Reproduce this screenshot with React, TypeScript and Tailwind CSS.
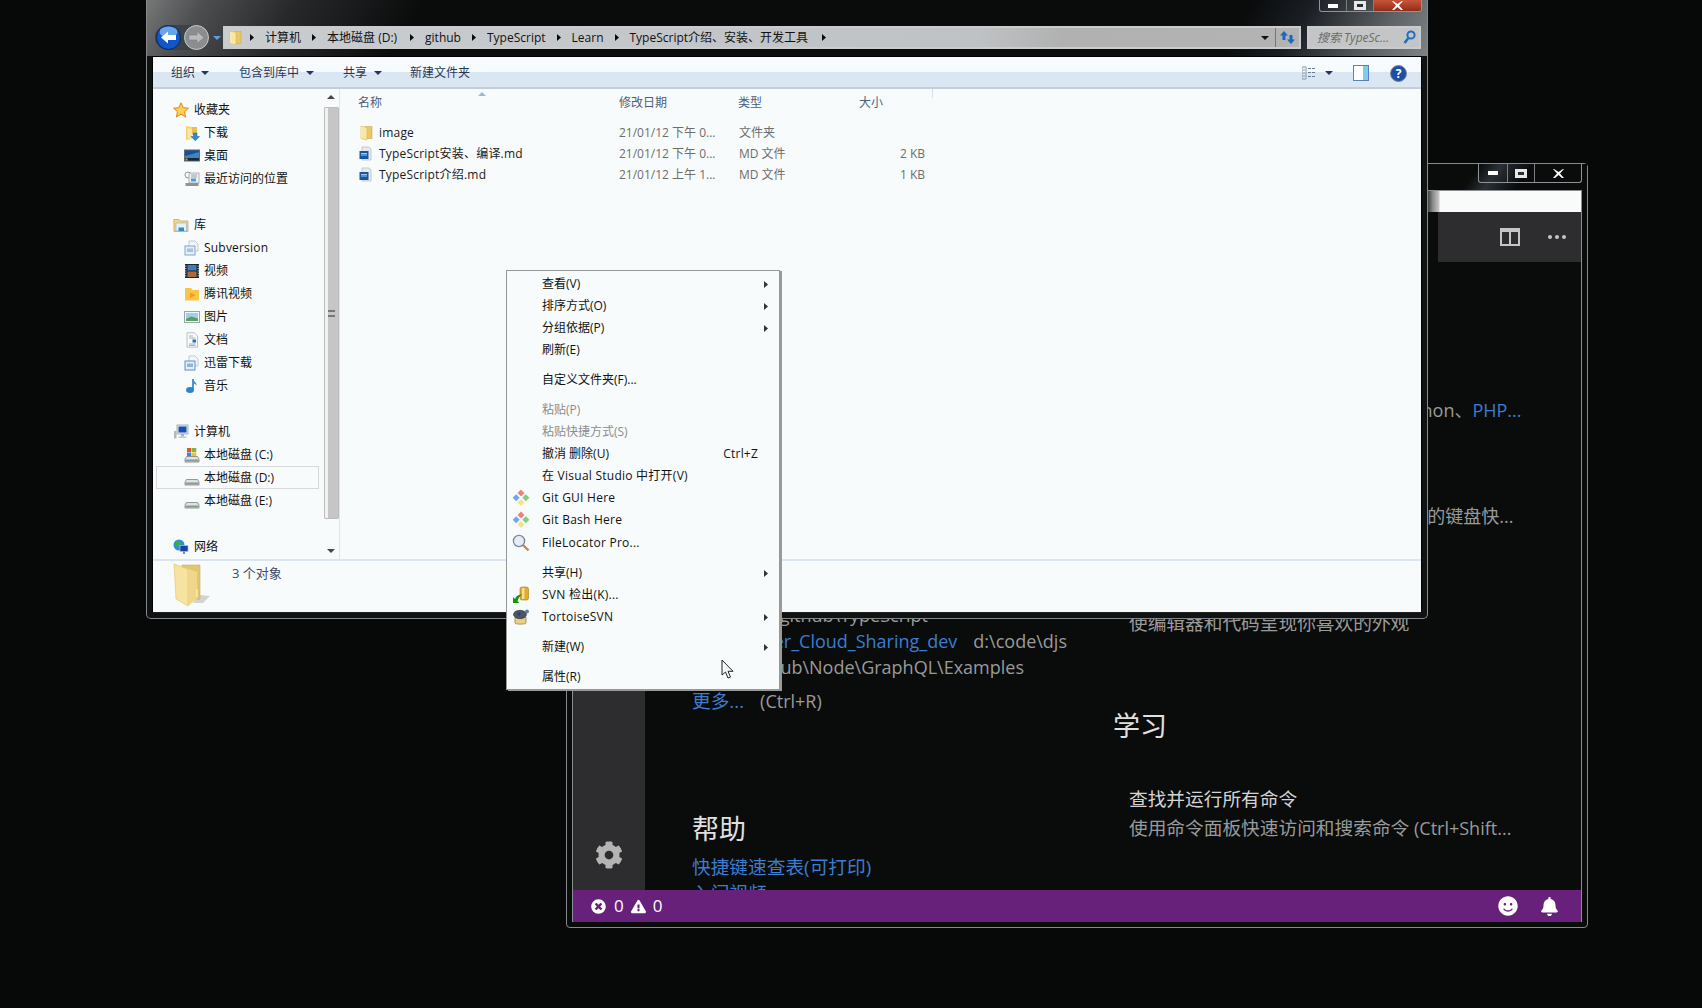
import React from "react";
import { FaCog, FaSmile, FaBell, FaTimesCircle, FaExclamationTriangle } from "react-icons/fa";

const Tri = ({ c = "#0a0a0a" }: { c?: string }) => (
  <svg width="4" height="7" viewBox="0 0 4 7" className="shrink-0"><path d="M0 0L4 3.5L0 7Z" fill={c} /></svg>
);
const Caret = ({ c = "#1e395b" }: { c?: string }) => (
  <svg width="8" height="4" viewBox="0 0 8 4" className="shrink-0"><path d="M0 0H8L4 4Z" fill={c} /></svg>
);

const Folder = () => (
  <svg width="16" height="16" viewBox="0 0 16 16" className="shrink-0">
    <path d="M7 1.5H14V13.5H7Z" fill="#e9c868" stroke="#cfa94e" strokeWidth=".6" />
    <path d="M3 1L9 2.5V15L3 13.5Z" fill="#f9e6a0" stroke="#dcb95c" strokeWidth=".6" />
    <path d="M3.8 2V13" stroke="#fff6cf" strokeWidth=".8" />
  </svg>
);
const BigFolder = () => (
  <svg width="38" height="44" viewBox="0 0 38 44" className="shrink-0">
    <path d="M27 32L37 33L30 40L20 40Z" fill="#cfd3d6" />
    <path d="M9 2H27V36L9 38Z" fill="#e3c672" stroke="#d2b05a" strokeWidth=".6" />
    <path d="M1 1L15 6V43L3 36Z" fill="#f7e3a0" stroke="#e0c268" strokeWidth=".6" />
    <path d="M15 6L24 9V36L15 43Z" fill="#efd68a" />
    <path d="M24 26V34" stroke="#fff6d0" strokeWidth="1" />
  </svg>
);
const MdFile = () => (
  <svg width="16" height="16" viewBox="0 0 16 16" className="shrink-0">
    <path d="M4 1H11L13 3V14H4Z" fill="#e9eaec" stroke="#b4b8bc" strokeWidth=".7" />
    <rect x="1.5" y="5" width="9" height="8" fill="#15589f" />
    <path d="M3 7.5H9M3 9H9" stroke="#cfe2f4" strokeWidth=".8" />
  </svg>
);
const Star = () => (
  <svg width="16" height="16" viewBox="0 0 16 16"><path d="M8 .8L10.2 5.7L15.4 6.2L11.5 9.7L12.7 15L8 12.2L3.3 15L4.5 9.7L.6 6.2L5.8 5.7Z" fill="#fbd14d" stroke="#e4831f" strokeWidth="1" /></svg>
);
const Download = () => (
  <svg width="16" height="16" viewBox="0 0 16 16">
    <path d="M2 1L8 2V14L2 15Z" fill="#f3d36f" /><path d="M8 2H13V10H8Z" fill="#e8bd56" /><path d="M3.5 3L8 4V14L3.5 13.5Z" fill="#fae7a4" />
    <path d="M9.5 8H13V11.5H15.5L11.3 15.8L7 11.5H9.5Z" fill="#2f8bd8" stroke="#1a5f9f" strokeWidth=".5" />
  </svg>
);
const Desktop = () => (
  <svg width="16" height="16" viewBox="0 0 16 16">
    <rect x=".5" y="2" width="15" height="11" fill="#1b4f94" stroke="#5b6b7d" />
    <path d="M1 8L15 4V10H1Z" fill="#3f82cc" /><rect x="1" y="10" width="14" height="2.5" fill="#20262c" /><rect x="1.5" y="10.5" width="2" height="2" fill="#e09a2f" />
  </svg>
);
const Recent = () => (
  <svg width="16" height="16" viewBox="0 0 16 16">
    <circle cx="4" cy="4" r="3" fill="#fff" stroke="#8d9499" />
    <rect x="5" y="2" width="10" height="10" fill="#eef1f3" stroke="#9aa2a8" strokeWidth=".8" />
    <path d="M7 4H13M7 6H13" stroke="#9aa2a8" /><rect x="7" y="7.5" width="5" height="3" fill="#4d9ad8" />
    <rect x="1.5" y="12" width="13" height="3" fill="#8c9298" />
  </svg>
);
const Library = () => (
  <svg width="16" height="16" viewBox="0 0 16 16">
    <path d="M.8 2.5H6L7 4H15V14.5H1Z" fill="#f3d67f" stroke="#c9a24b" strokeWidth=".7" />
    <path d="M3 6H13.5V14H3Z" fill="#e4f0fb" stroke="#8cb3d8" strokeWidth=".6" />
    <path d="M5.5 14V10.5H11V14" fill="#3b85c7" />
  </svg>
);
const DocLib = ({ accent = "#7ea7cf" }: { accent?: string }) => (
  <svg width="16" height="16" viewBox="0 0 16 16">
    <path d="M5 1H11L14 4V11H5Z" fill="#f4f6f8" stroke="#a8b8c8" strokeWidth=".7" />
    <rect x="1" y="6" width="10" height="9" fill="#e6eef6" stroke={accent} />
    <rect x="3" y="8.5" width="6" height="3.5" fill={accent} opacity=".6" />
  </svg>
);
const Video = () => (
  <svg width="16" height="16" viewBox="0 0 16 16">
    <rect x="1" y="1" width="14" height="14" fill="#1c2630" /><rect x="3.5" y="2" width="9" height="5.5" fill="#3d7db4" /><rect x="3.5" y="8.5" width="9" height="5.5" fill="#b06a37" />
    <path d="M1.8 2.5V14M14.2 2.5V14" stroke="#dfe6ec" strokeWidth="1" strokeDasharray="1.2 1.2" />
  </svg>
);
const Tencent = () => (
  <svg width="16" height="16" viewBox="0 0 16 16">
    <path d="M1 2H7L8.5 4H15V14.5H1Z" fill="#f8c545" /><path d="M6 6.5L11.5 9.3L6 12Z" fill="#f39a1f" />
  </svg>
);
const Picture = () => (
  <svg width="16" height="16" viewBox="0 0 16 16">
    <rect x=".5" y="2.5" width="15" height="11" fill="#f3f6f8" stroke="#9aa5ae" />
    <rect x="2" y="4" width="12" height="8" fill="#9fd0ee" /><path d="M2 10L7 7.5L14 9.5V12H2Z" fill="#5b9e5d" />
  </svg>
);
const Doc = () => (
  <svg width="16" height="16" viewBox="0 0 16 16">
    <path d="M3 .8H10.5L13.5 3.8V15.2H3Z" fill="#f8fafb" stroke="#a9b2ba" strokeWidth=".8" />
    <path d="M5 4H9M5 6H11.5M5 12H11.5M5 13.5H11.5" stroke="#8ea0b0" strokeWidth=".8" /><rect x="8.5" y="7.5" width="3.5" height="3" fill="#2f6fb1" />
  </svg>
);
const Music = () => (
  <svg width="16" height="16" viewBox="0 0 16 16">
    <path d="M9 1V11.5" stroke="#2579c9" strokeWidth="1.6" /><ellipse cx="6" cy="12" rx="4" ry="3" fill="#2b83d4" /><path d="M9 1C10 4 13 4 12.5 8C12 6 10.5 6 9 5.5Z" fill="#3a95de" />
  </svg>
);
const Computer = () => (
  <svg width="16" height="16" viewBox="0 0 16 16">
    <rect x="4" y="1" width="11" height="9" fill="#e4e8ec" stroke="#8a949c" strokeWidth=".7" /><rect x="5.5" y="2.5" width="8" height="6" fill="#1751b8" />
    <rect x="8" y="10" width="3" height="2.5" fill="#a9b0b6" /><rect x="5.5" y="12.5" width="8" height="1.5" fill="#c4c9ce" /><rect x="1" y="7" width="2.5" height="7.5" fill="#b2bbb2" />
  </svg>
);
const Drive = ({ win = false }: { win?: boolean }) => (
  <svg width="16" height="16" viewBox="0 0 16 16">
    {win && <g><rect x="3" y="1" width="4.3" height="4" fill="#e2552b" /><rect x="8" y="1" width="4.3" height="4" fill="#7fb73a" /><rect x="3" y="5.5" width="4.3" height="4" fill="#3a86d8" /><rect x="8" y="5.5" width="4.3" height="4" fill="#f3c02d" /></g>}
    <path d="M2.5 9.5H13.5L15 12V15H1V12Z" fill="#dfe2e3" stroke="#7d8285" strokeWidth=".8" />
    <rect x="1.5" y="12.5" width="13" height="2" fill="#8f9598" /><rect x="11.5" y="12.8" width="1.5" height="1.2" fill="#4fc04f" />
  </svg>
);
const Network = () => (
  <svg width="16" height="16" viewBox="0 0 16 16">
    <circle cx="6" cy="6" r="5.5" fill="#2f8fd6" /><path d="M3 2.5L7 1.5L8 5L5 8L2 5.5Z" fill="#47a846" />
    <rect x="7" y="6.5" width="8" height="6" fill="#1444ad" stroke="#bac3cc" strokeWidth=".7" /><rect x="10" y="12.5" width="2" height="2.5" fill="#7f8a94" />
  </svg>
);
const GitIcon = () => (
  <svg width="18" height="18" viewBox="0 0 18 18">
    <path d="M9 .5L12.5 4L9 7.5L5.5 4Z" fill="#f08080" /><path d="M4.2 5.2L7.7 8.7L4.2 12.2L.7 8.7Z" fill="#6fa8e8" />
    <path d="M13.8 5.2L17.3 8.7L13.8 12.2L10.3 8.7Z" fill="#7fcf7f" /><path d="M9 9.9L12.5 13.4L9 16.9L5.5 13.4Z" fill="#f4e486" />
  </svg>
);
const Lens = () => (
  <svg width="18" height="18" viewBox="0 0 18 18">
    <line x1="10.5" y1="10.5" x2="16.5" y2="16.5" stroke="#c98a4d" strokeWidth="2.4" />
    <circle cx="7" cy="7" r="5.6" fill="#e4edf5" stroke="#7b8791" strokeWidth="1.3" />
  </svg>
);
const SvnCheckout = () => (
  <svg width="18" height="18" viewBox="0 0 18 18">
    <rect x="8" y="1" width="8.5" height="13" rx="2" fill="#e7a92c" stroke="#a9761a" strokeWidth=".6" /><rect x="10" y="2" width="2.5" height="11" fill="#f8de8b" />
    <path d="M1 17V11L3 13C4.5 9.5 7 8.5 10.5 8.5C8 10 6.5 11.5 5.5 15L7.5 17Z" fill="#119611" />
  </svg>
);
const Tortoise = () => (
  <svg width="18" height="18" viewBox="0 0 18 18">
    <path d="M3 9H14V15C14 16.5 3 16.5 3 15Z" fill="#e9cf80" stroke="#8b7740" strokeWidth=".7" />
    <ellipse cx="8" cy="6.5" rx="6.5" ry="4.2" fill="#4a5568" stroke="#2a303a" strokeWidth=".6" /><circle cx="15" cy="3.5" r="2" fill="#5a7fb5" /><circle cx="7" cy="6" r="1.5" fill="#2d3f70" />
  </svg>
);

const Row = ({ icon, label, child, selected, wide }: { icon?: React.ReactNode; label?: string; child?: boolean; selected?: boolean; wide?: boolean }) => (
  <div className={selected ? "h-[23px] mr-[2px] flex items-center border border-[#d9d9d9] box-border" : "h-[23px] flex items-center"}>
    {label && (
      <div className={child ? `flex items-center gap-[4px] -ml-px ${selected ? "pl-[28px]" : "pl-[29px]"}` : "flex items-center gap-[5px] pl-[17px]"}>
        <span className="w-4 h-4 shrink-0">{icon}</span>
        <span className={wide ? "text-[12px] text-[#111] leading-none whitespace-nowrap tracking-[0.2px]" : "text-[12px] text-[#111] leading-none whitespace-nowrap"}>{label}</span>
      </div>
    )}
  </div>
);

const Crumb = ({ t, cls = "mr-[11px]" }: { t: string; cls?: string }) => (
  <div className="flex items-center">
    <Tri />
    <span className={`ml-[11px] ${cls} whitespace-nowrap text-[12px] text-[#111]`}>{t}</span>
  </div>
);

const FileRow = ({ icon, name, date, type, size }: { icon: React.ReactNode; name: string; date: string; type: string; size?: string }) => (
  <div className="grid grid-cols-[20px_240px_120px_186px] h-[21px] items-center pl-[19px] text-[12px]">
    <span className="flex items-center -ml-px">{icon}</span>
    <span className="text-[#1a1a1a] whitespace-nowrap tracking-[0.2px]">{name}</span>
    <span className="text-[#6d6d6d] whitespace-nowrap">{date}</span>
    <span className="flex">
      <span className="text-[#6d6d6d] w-[60px] whitespace-nowrap">{type}</span>
      <span className="text-[#6d6d6d] flex-1 text-right">{size}</span>
    </span>
  </div>
);

const Caption = ({ w1, w2, w3, red, h }: { w1: string; w2: string; w3: string; red?: boolean; h: string }) => (
  <div className={`flex ${h} border border-t-0 border-[#8f9496] rounded-b-[3px] overflow-hidden`}>
    <div className={`${w1} flex items-center justify-center border-r border-[#7a7f82]`}><span className="block w-[10px] h-[4px] bg-white" /></div>
    <div className={`${w2} flex items-center justify-center border-r border-[#7a7f82]`}><span className="block w-[12px] h-[9px] border-[3px] border-[#e8e8e8] bg-[#2a2c2e]" /></div>
    <div className={`${w3} flex items-center justify-center ${red ? "bg-[linear-gradient(180deg,#c9553a,#8f2d18)]" : ""}`}>
      <svg width="11" height="9" viewBox="0 0 11 9"><path d="M1 0L5.5 3L10 0H11L7 4.5L11 9H9L5.5 6L2 9H0L4 4.5L0 0Z" fill="#fff" /></svg>
    </div>
  </div>
);

const MenuItem = ({ label, icon, arrow, dis, right, cls = "", wide }: { label: string; icon?: React.ReactNode; arrow?: boolean; dis?: boolean; right?: string; cls?: string; wide?: boolean }) => (
  <div className={`h-[22px] flex items-center relative pl-[35px] pr-[11px] ${cls}`}>
    {icon && <span className="absolute left-[5px] top-[2px]">{icon}</span>}
    <span className={`text-[12px] whitespace-nowrap ${dis ? "text-[#8c8c8c]" : "text-[#111]"} ${wide ? "tracking-[0.25px]" : ""}`}>{label}</span>
    {right && <span className="ml-auto mr-[10px] text-[12px] text-[#111] tracking-[0.2px]">{right}</span>}
    {arrow && <span className="ml-auto"><Tri c="#333" /></span>}
  </div>
);

const FONT = "[font-family:'Open_Sans','Noto_Sans_CJK_SC',sans-serif]";

export default function App() {
  return (
    <div className={`relative w-[1702px] h-[1008px] overflow-hidden bg-[#070909] ${FONT}`}>
      {/* VS Code window */}
      <div className="absolute left-[566px] top-[163px] w-[1022px] h-[765px] border border-[#85898b] rounded-[4px] flex flex-col bg-[#0a0c0c] pb-[5px]">
        <div className="h-[26px] flex justify-end pr-[5px] bg-[linear-gradient(125deg,#0a0c0c_88%,#2a3036_90%,#0a0c0c_93%)]">
          <Caption w1="w-[29px]" w2="w-[27px]" w3="w-[46px]" h="h-[19px]" />
        </div>
        <div className="mx-[5px] flex-1 flex flex-col border-x border-t border-[#8a8e90] min-h-0">
          <div className="h-[21px] shrink-0 bg-[linear-gradient(90deg,#444_855px,#8d8d8d_860px,#c8c8c8_866px,#f9fbfb_867px)]" />
          <div className="flex-1 flex min-h-0 overflow-hidden">
            <div className="w-[72px] shrink-0 bg-[#2d2d30] flex flex-col justify-end items-center pb-[21px]">
              <FaCog className="text-[#b4b4b4] text-[28px]" />
            </div>
            <div className="flex-1 flex flex-col min-w-0">
              <div className="h-[50px] shrink-0 ml-[793px] bg-[#2d2d30] flex items-center">
                <svg width="20" height="18" viewBox="0 0 20 18" className="ml-[62px]"><path d="M0 0H20V18H0ZM2 4V16H9V4ZM11 4V16H18V4Z" fill="#c5c5c5" fillRule="evenodd" /></svg>
                <div className="ml-[28px] flex gap-[3px]">
                  <span className="w-1 h-1 rounded-full bg-[#c5c5c5]" /><span className="w-1 h-1 rounded-full bg-[#c5c5c5]" /><span className="w-1 h-1 rounded-full bg-[#c5c5c5]" />
                </div>
              </div>
              <div className="flex-1 flex min-h-0 text-[18px]">
                <div className="w-[467px] shrink-0 pl-[47px] pt-[340px]">
                  <div className="w-[236px] leading-[26px] text-right whitespace-nowrap"><span className="text-[#3b7dd0]">Learn</span><span className="ml-[10px] text-[#9a9a9a]">D:\github\TypeScript</span></div>
                  <div className="w-[375px] leading-[26px] text-right whitespace-nowrap"><span className="text-[#3b7dd0]">Docker_Cloud_Sharing_dev</span><span className="ml-[16px] text-[#9a9a9a]">d:\code\djs</span></div>
                  <div className="w-[332px] leading-[26px] text-right whitespace-nowrap"><span className="text-[#3b7dd0]">QL</span><span className="ml-[4px] text-[#9a9a9a]">D:\github\Node\GraphQL\Examples</span></div>
                  <div className="mt-[8px] leading-[26px] whitespace-nowrap"><span className="text-[#3b7dd0] text-[18.7px]">更多...</span><span className="ml-[16px] text-[#9a9a9a]">(Ctrl+R)</span></div>
                  <div className="mt-[95px] h-[40px] text-[27px] leading-[40px] text-[#e0e0e0]">帮助</div>
                  <div className="mt-[5px] leading-[26px] text-[#3b7dd0] text-[18.7px]">快捷键速查表(可打印)</div>
                  <div className="leading-[26px] text-[#3b7dd0] text-[18.7px]">入门视频</div>
                </div>
                <div className="flex-1 pl-[17px] pt-[104px] min-w-0">
                  <div className="leading-[29px] text-[#d4d4d4] text-[18.7px]">工具和语言</div>
                  <div className="leading-[29px] text-[#9a9a9a] whitespace-nowrap"><span className="text-[18.7px]">安装对</span> JavaScript、TypeScript、Python、<span className="text-[#3b7dd0]">PHP...</span></div>
                  <div className="mt-[48px] leading-[29px] text-[#d4d4d4] text-[18.7px]">设置和键绑定</div>
                  <div className="leading-[29px] text-[#9a9a9a] whitespace-nowrap">安装 Vim、Sublime、Atom 等编辑器的键盘快...</div>
                  <div className="mt-[48px] leading-[29px] text-[#d4d4d4] text-[18.7px]">颜色主题</div>
                  <div className="leading-[29px] text-[#9a9a9a] whitespace-nowrap text-[18.7px]">使编辑器和代码呈现你喜欢的外观</div>
                  <div className="mt-[69px] -ml-[16px] h-[40px] text-[27px] leading-[40px] text-[#e0e0e0]">学习</div>
                  <div className="mt-[38px] leading-[29px] text-[#d4d4d4] text-[18.7px]">查找并运行所有命令</div>
                  <div className="leading-[29px] text-[#9a9a9a] whitespace-nowrap"><span className="text-[18.7px]">使用命令面板快速访问和搜索命令</span> (Ctrl+Shift...</div>
                </div>
              </div>
            </div>
          </div>
          <div className="h-[32px] shrink-0 bg-[#68217a] flex items-center text-white text-[17px] pl-[18px] pr-[22px]">
            <FaTimesCircle className="text-[15px]" />
            <span className="ml-[8px]">0</span>
            <FaExclamationTriangle className="ml-[7px] text-[15px]" />
            <span className="ml-[7px]">0</span>
            <FaSmile className="ml-auto text-[20px]" />
            <FaBell className="ml-[22px] text-[19px]" />
          </div>
        </div>
      </div>

      {/* Explorer window */}
      <div className="absolute left-[146px] top-0 w-[1282px] h-[619px] flex flex-col border-x border-b border-[#85898b] rounded-b-[5px] bg-[#101314]">
        <div className="h-[56px] shrink-0 bg-[linear-gradient(120deg,#777_0px,#4c4e50_50px,#26282a_130px,#0a0c0c_240px,#0a0c0c_960px,#1a1e24_1010px,#5f6467_1090px,#7f8486_1138px)]">
          <div className="h-[12px] flex justify-end pr-[5px]">
            <Caption w1="w-[27px]" w2="w-[27px]" w3="w-[47px]" red h="h-[12px]" />
          </div>
          <div className="mt-[14px] h-[23px] flex items-center pl-[9px] pr-[6px]">
            <div className="h-[25px] w-[55px] rounded-full bg-[#3c4246] flex items-center justify-between px-px -ml-px">
              <svg width="25" height="25" viewBox="0 0 25 25">
                <circle cx="12.5" cy="12.5" r="12" fill="#1257c9" stroke="#0c2a58" />
                <ellipse cx="12.5" cy="7" rx="9" ry="5.5" fill="#6aa5ec" />
                <path d="M5 12.5L12 6.5V10H20V15H12V18.5Z" fill="#fff" />
              </svg>
              <svg width="25" height="25" viewBox="0 0 25 25">
                <circle cx="12.5" cy="12.5" r="12" fill="#8b8d8f" stroke="#c8cacb" />
                <path d="M20 12.5L13 6.5V10H5V15H13V18.5Z" fill="#b9babb" stroke="#77797b" strokeWidth=".5" />
              </svg>
            </div>
            <span className="ml-[2px] w-[9px] flex justify-center"><Caret c="#5aa0e0" /></span>
            <div className="ml-[2px] w-[1078px] h-[23px] flex items-center border-2 border-[#c9cccd] box-border bg-[linear-gradient(90deg,#c9cdd0_0%,#bfc2c4_70%,#b1b1b1_78%,#b3b3b3_100%)]">
              <span className="ml-[2px] mr-[7px]"><Folder /></span>
              <Crumb t="计算机" /><Crumb t="本地磁盘 (D:)" cls="mr-[13px]" /><Crumb t="github" /><Crumb t="TypeScript" /><Crumb t="Learn" /><Crumb t="TypeScript介绍、安装、开发工具" cls="mr-[14px]" />
              <Tri />
              <span className="ml-auto"><Caret c="#111" /></span>
              <span className="ml-[6px] h-full w-px bg-[#777]" />
              <svg width="17" height="17" viewBox="0 0 17 17" className="mx-[3px]"><path d="M5 2L1 6.5H3.5V11H6.5V6.5H9Z" fill="#1b68c0" /><path d="M12 15L16 10.5H13.5V6H10.5V10.5H8Z" fill="#1b68c0" /></svg>
            </div>
            <div className="ml-[6px] flex-1 h-[23px] flex items-center border-2 border-[#c9cccd] box-border bg-[#c4c5c6] pl-[8px]">
              <span className="text-[12px] italic text-[#6b6b6b] whitespace-nowrap">搜索 TypeSc...</span>
              <svg width="13" height="15" viewBox="0 0 13 15" className="ml-auto mr-[3px]"><circle cx="8" cy="5" r="3.6" fill="none" stroke="#1f6fc2" strokeWidth="2" /><path d="M5.4 8L1.5 13" stroke="#1f6fc2" strokeWidth="2.6" /></svg>
            </div>
          </div>
        </div>
        <div className="mx-[5px] flex-1 min-h-0 flex flex-col bg-[#f8fbfb] border border-black border-b-[#222] mb-[5px]">
          {/* toolbar */}
          <div className="h-[32px] shrink-0 flex items-center pt-[2px] border-b-2 border-[#c6cdd6] bg-[linear-gradient(180deg,#f8fbfd_0%,#f8fbfd_50%,#dbe6f3_50%,#dbe6f3_100%)] text-[12px] text-[#1e395b]">
            <span className="ml-[18px]">组织</span>
            <span className="ml-[6px]"><Caret /></span>
            <span className="ml-[30px]">包含到库中</span>
            <span className="ml-[7px]"><Caret /></span>
            <span className="ml-[29px]">共享</span>
            <span className="ml-[7px]"><Caret /></span>
            <span className="ml-[28px]">新建文件夹</span>
            <svg width="14" height="14" viewBox="0 0 14 14" className="ml-auto"><path d="M0 1H4V13H0ZM1 4H3M1 7H3M1 10H3" fill="none" stroke="#8a97a8" /><path d="M6 2.5H14M6 6.5H14M6 10.5H14" stroke="#667a92" strokeDasharray="3 1" /></svg>
            <span className="ml-[9px]"><Caret /></span>
            <svg width="16" height="16" viewBox="0 0 16 16" className="ml-[20px]"><rect x=".5" y=".5" width="15" height="15" fill="#fff" stroke="#5a83b5" /><rect x="10" y="1" width="5" height="14" fill="#7fcdea" /></svg>
            <svg width="17" height="17" viewBox="0 0 17 17" className="ml-[21px] mr-[14px]"><circle cx="8.5" cy="8.5" r="8" fill="#1c4ea8" stroke="#7c8695" /><text x="8.5" y="13" textAnchor="middle" fontSize="12" fontWeight="bold" fill="#fff">?</text></svg>
          </div>
          <div className="flex-1 min-h-0 flex">
            {/* sidebar */}
            <div className="w-[187px] shrink-0 flex border-r border-[#dbe7f2]">
              <div className="flex-1 min-w-0 pt-[9px] overflow-hidden pl-[3px]">
                <Row label="收藏夹" icon={<Star />} />
                <Row child label="下载" icon={<Download />} />
                <Row child label="桌面" icon={<Desktop />} />
                <Row child label="最近访问的位置" icon={<Recent />} />
                <Row />
                <Row label="库" icon={<Library />} />
                <Row child wide label="Subversion" icon={<DocLib />} />
                <Row child label="视频" icon={<Video />} />
                <Row child label="腾讯视频" icon={<Tencent />} />
                <Row child label="图片" icon={<Picture />} />
                <Row child label="文档" icon={<Doc />} />
                <Row child label="迅雷下载" icon={<DocLib accent="#5a8fc4" />} />
                <Row child label="音乐" icon={<Music />} />
                <Row />
                <Row label="计算机" icon={<Computer />} />
                <Row child label="本地磁盘 (C:)" icon={<Drive win />} />
                <Row child selected label="本地磁盘 (D:)" icon={<Drive />} />
                <Row child label="本地磁盘 (E:)" icon={<Drive />} />
                <Row />
                <Row label="网络" icon={<Network />} />
              </div>
              <div className="w-[16px] shrink-0 flex flex-col items-center pt-[6px] pb-[6px] ml-[2px]">
                <svg width="8" height="4" viewBox="0 0 8 4"><path d="M0 4H8L4 0Z" fill="#444" /></svg>
                <div className="mt-[8px] w-[15px] h-[412px] border border-[#bdbdbd] rounded-[1px] bg-[linear-gradient(90deg,#f2f2f2_0,#f2f2f2_3px,#c6c6c6_3px)] flex items-center justify-center">
                  <span className="w-[7px] h-[7px] border-y-2 border-[#777]" />
                </div>
                <span className="mt-auto"><Caret c="#444" /></span>
              </div>
            </div>
            {/* file list */}
            <div className="flex-1 min-w-0 flex flex-col">
              <div className="h-[28px] shrink-0 relative">
                <div className="grid grid-cols-[261px_119px_121px_73px_1px] pl-[18px] h-[28px] text-[12px] text-[#4c607a] items-center">
                  <span>名称</span><span>修改日期</span><span>类型</span><span>大小</span><span className="self-start h-[9px] bg-[#d5e1ee]" />
                </div>
                <span className="absolute left-[138px] top-[3px] w-0 h-0 border-x-[4px] border-x-transparent border-b-[4px] border-b-[#9fb6d0]" />
              </div>
              <div className="pt-[5px]">
                <FileRow icon={<Folder />} name="image" date="21/01/12 下午 0..." type="文件夹" />
                <FileRow icon={<MdFile />} name="TypeScript安装、编译.md" date="21/01/12 下午 0..." type="MD 文件" size="2 KB" />
                <FileRow icon={<MdFile />} name="TypeScript介绍.md" date="21/01/12 上午 1..." type="MD 文件" size="1 KB" />
              </div>
            </div>
          </div>
          {/* status */}
          <div className="h-[53px] shrink-0 border-t-2 border-[#dbe5f1] flex">
            <span className="ml-[20px] mt-[2px]"><BigFolder /></span>
            <span className="ml-[21px] mt-[1px] text-[13px] leading-[22px] text-[#3c4a66]">3 个对象</span>
          </div>
        </div>
      </div>

      {/* Context menu */}
      <div className="absolute left-[506px] top-[270px] w-[274px] h-[420px] bg-[#f8fbfb] border border-[#979797] pt-[2px] shadow-[2px_1px_0_#9a9a9a]">
        <MenuItem label="查看(V)" arrow />
        <MenuItem label="排序方式(O)" arrow />
        <MenuItem label="分组依据(P)" arrow />
        <MenuItem label="刷新(E)" />
        <MenuItem label="自定义文件夹(F)..." cls="mt-[8px]" />
        <MenuItem label="粘贴(P)" dis cls="mt-[8px]" />
        <MenuItem label="粘贴快捷方式(S)" dis />
        <MenuItem label="撤消 删除(U)" right="Ctrl+Z" />
        <MenuItem wide label="在 Visual Studio 中打开(V)" />
        <MenuItem wide label="Git GUI Here" icon={<GitIcon />} />
        <MenuItem wide label="Git Bash Here" icon={<GitIcon />} />
        <MenuItem wide label="FileLocator Pro..." icon={<Lens />} cls="mt-[1px]" />
        <MenuItem label="共享(H)" arrow cls="mt-[8px]" />
        <MenuItem wide label="SVN 检出(K)..." icon={<SvnCheckout />} />
        <MenuItem wide label="TortoiseSVN" icon={<Tortoise />} arrow />
        <MenuItem label="新建(W)" arrow cls="mt-[8px]" />
        <MenuItem label="属性(R)" cls="mt-[8px]" />
      </div>

      {/* Cursor */}
      <svg width="14" height="21" viewBox="0 0 14 21" className="absolute left-[721px] top-[659px]">
        <path d="M1 1V16L4.5 13L7 19L9.5 18L7 12.3H12Z" fill="#f8fbfb" stroke="#222" strokeWidth="1" />
      </svg>
    </div>
  );
}
